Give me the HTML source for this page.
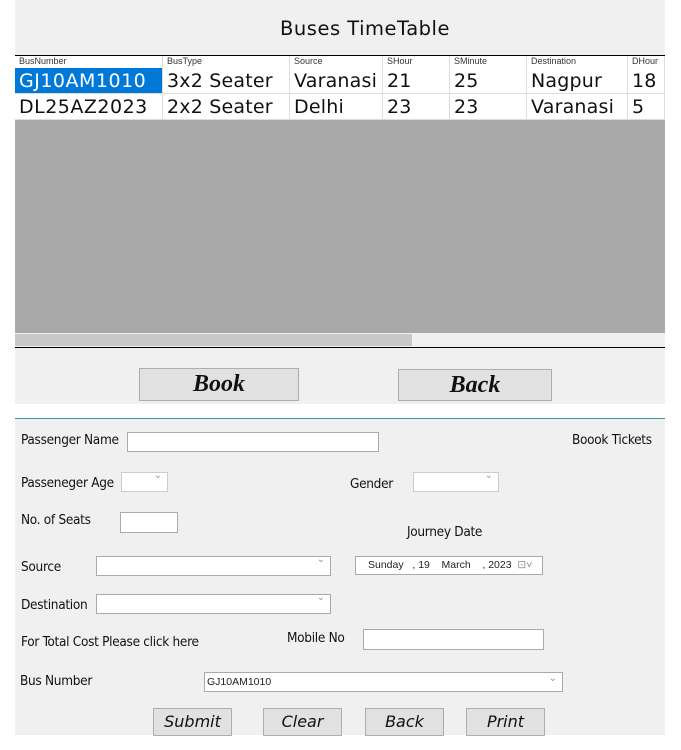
<!DOCTYPE html>
<html><head><meta charset="utf-8"><style>
body{margin:0;width:681px;height:750px;background:#fff;position:relative;overflow:hidden;font-family:"Liberation Sans",sans-serif}
.a{position:absolute}
.lbl{position:absolute;font-size:13.5px;color:#111;font-family:"DejaVu Sans Condensed","Liberation Sans",sans-serif;letter-spacing:-0.3px}
.box{position:absolute;background:#fff;border:1px solid #aaa;box-sizing:border-box}
.dd:after{content:"⌄";position:absolute;right:5px;top:-3px;font-size:10px;color:#999}
.cell{position:absolute;border-right:1px solid #ddd;box-sizing:border-box;padding-left:4px;white-space:nowrap;overflow:hidden}
.h{top:56px;height:12px;font-size:9px;color:#333}
.r{font-family:"DejaVu Sans",sans-serif;font-size:19px;letter-spacing:0.2px;color:#111;height:26px;line-height:26px;border-bottom:1px solid #ddd}
.btn{position:absolute;background:#e1e1e1;border:1px solid #adadad;box-sizing:border-box;text-align:center;font-style:italic;color:#111}
</style></head><body>
<div class="a" style="left:15px;top:0;width:650px;height:404px;background:#f0f0f0"></div>
<div class="a" style="left:40px;top:17px;width:650px;text-align:center;font-size:19.5px;letter-spacing:0.5px;font-family:'DejaVu Sans',sans-serif;color:#111">Buses TimeTable</div>
<div class="a" style="left:15px;top:55px;width:650px;height:1px;background:#000"></div>
<div class="a" style="left:15px;top:56px;width:650px;height:64px;background:#fff"></div>
<div class="a" style="left:15px;top:120px;width:650px;height:213px;background:#a9a9a9"></div>
<div class="a" style="left:15px;top:333px;width:650px;height:13px;background:#f0f0f0"></div>
<div class="a" style="left:15px;top:334px;width:397px;height:12px;background:#c8c8c8"></div>
<div class="a" style="left:15px;top:347px;width:650px;height:1px;background:#000"></div>

<div class="cell h" style="left:15px;width:148px">BusNumber</div>
<div class="cell h" style="left:163px;width:127px">BusType</div>
<div class="cell h" style="left:290px;width:93px">Source</div>
<div class="cell h" style="left:383px;width:67px">SHour</div>
<div class="cell h" style="left:450px;width:77px">SMinute</div>
<div class="cell h" style="left:527px;width:101px">Destination</div>
<div class="cell h" style="left:628px;width:37px">DHour</div>

<div class="cell r" style="top:68px;left:15px;width:148px;background:#0078d7;color:#fff;letter-spacing:0.5px">GJ10AM1010</div>
<div class="cell r" style="top:68px;left:163px;width:127px">3x2 Seater</div>
<div class="cell r" style="top:68px;left:290px;width:93px">Varanasi</div>
<div class="cell r" style="top:68px;left:383px;width:67px">21</div>
<div class="cell r" style="top:68px;left:450px;width:77px">25</div>
<div class="cell r" style="top:68px;left:527px;width:101px">Nagpur</div>
<div class="cell r" style="top:68px;left:628px;width:37px">18</div>
<div class="cell r" style="top:94px;left:15px;width:148px;letter-spacing:0.5px">DL25AZ2023</div>
<div class="cell r" style="top:94px;left:163px;width:127px">2x2 Seater</div>
<div class="cell r" style="top:94px;left:290px;width:93px">Delhi</div>
<div class="cell r" style="top:94px;left:383px;width:67px">23</div>
<div class="cell r" style="top:94px;left:450px;width:77px">23</div>
<div class="cell r" style="top:94px;left:527px;width:101px">Varanasi</div>
<div class="cell r" style="top:94px;left:628px;width:37px">5</div>

<div class="btn" style="left:139px;top:368px;width:160px;height:33px;font:italic bold 24px 'Liberation Serif',serif;line-height:31px">Book</div>
<div class="btn" style="left:398px;top:369px;width:154px;height:32px;font:italic bold 24px 'Liberation Serif',serif;line-height:31px">Back</div>

<div class="a" style="left:15px;top:418px;width:650px;height:1px;background:#2a9d9a"></div>
<div class="a" style="left:15px;top:419px;width:650px;height:316px;background:#f0f0f0"></div>

<div class="lbl" style="left:21px;top:432px">Passenger Name</div>
<div class="box" style="left:127px;top:432px;width:252px;height:20px"></div>
<div class="lbl" style="left:572px;top:432px">Boook Tickets</div>
<div class="lbl" style="left:21px;top:475px">Passeneger Age</div>
<div class="box dd" style="left:121px;top:472px;width:47px;height:20px;border-color:#ccc"></div>
<div class="lbl" style="left:350px;top:476px">Gender</div>
<div class="box dd" style="left:413px;top:472px;width:86px;height:20px;border-color:#ccc"></div>
<div class="lbl" style="left:21px;top:512px">No. of Seats</div>
<div class="box" style="left:120px;top:512px;width:58px;height:21px"></div>
<div class="lbl" style="left:407px;top:524px">Journey Date</div>
<div class="lbl" style="left:21px;top:559px">Source</div>
<div class="box dd" style="left:96px;top:556px;width:235px;height:20px"></div>
<div class="box" style="left:355px;top:556px;width:188px;height:19px;font-size:10.5px;color:#222;line-height:17px;padding-left:12px;white-space:pre">Sunday   , 19    March    , 2023  <span style="color:#888">⊡˅</span></div>
<div class="lbl" style="left:21px;top:597px">Destination</div>
<div class="box dd" style="left:96px;top:594px;width:235px;height:20px"></div>
<div class="lbl" style="left:21px;top:634px">For Total Cost Please click here</div>
<div class="lbl" style="left:287px;top:630px">Mobile No</div>
<div class="box" style="left:363px;top:629px;width:181px;height:21px"></div>
<div class="lbl" style="left:20px;top:673px">Bus Number</div>
<div class="box dd" style="left:204px;top:672px;width:359px;height:20px;font-size:10.5px;line-height:18px;padding-left:2px;color:#222">GJ10AM1010</div>

<div class="btn" style="left:153px;top:708px;width:79px;height:28px;font-size:16px;line-height:26px;font-family:'DejaVu Sans',sans-serif">Submit</div>
<div class="btn" style="left:263px;top:708px;width:79px;height:28px;font-size:16px;line-height:26px;font-family:'DejaVu Sans',sans-serif">Clear</div>
<div class="btn" style="left:365px;top:708px;width:79px;height:28px;font-size:16px;line-height:26px;font-family:'DejaVu Sans',sans-serif">Back</div>
<div class="btn" style="left:466px;top:708px;width:79px;height:28px;font-size:16px;line-height:26px;font-family:'DejaVu Sans',sans-serif">Print</div>
</body></html>
